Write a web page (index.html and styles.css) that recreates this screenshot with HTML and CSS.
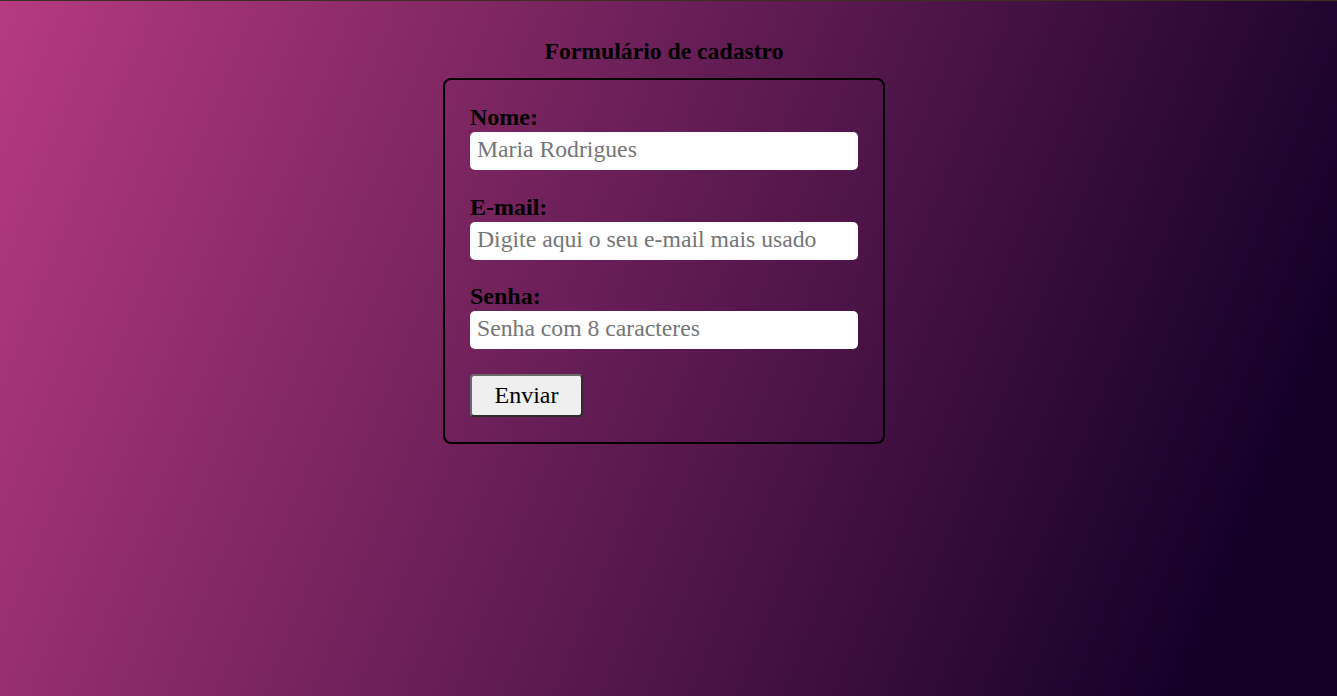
FILE: index.html
```html
<!DOCTYPE html>
<html lang="pt-BR">
<head>
<meta charset="utf-8">
<title>Formulário de cadastro</title>
<link rel="stylesheet" href="styles.css">
</head>
<body>
  <main class="page">
    <h2 class="title">Formulário de cadastro</h2>
    <form class="card">
      <label class="field-label" for="nome">Nome:</label>
      <input class="field-input" id="nome" type="text" placeholder="Maria Rodrigues">
      <label class="field-label" for="email">E-mail:</label>
      <input class="field-input" id="email" type="email" placeholder="Digite aqui o seu e-mail mais usado">
      <label class="field-label" for="senha">Senha:</label>
      <input class="field-input" id="senha" type="password" placeholder="Senha com 8 caracteres">
      <button class="submit" type="button">Enviar</button>
    </form>
  </main>
</body>
</html>
```
FILE: styles.css
```css
html, body {
  margin: 0;
  height: 100%;
}

body {
  border-top: 1px solid #3b3020;
  box-sizing: border-box;
  background: linear-gradient(112deg, #b63a80 0%, #15002a 90%);
  font-family: "Liberation Serif", "Times New Roman", serif;
  color: #000;
}

.page {
  display: flex;
  flex-direction: column;
  align-items: center;
  padding-right: 9px;
}

.title {
  margin: 37px 0 13px;
  font-size: 23.7px;
  font-weight: bold;
  line-height: normal;
}

.card {
  width: 388px;
  border: 2px solid #000;
  border-radius: 8px;
  padding: 24px 25px 25px;
  display: flex;
  flex-direction: column;
  align-items: flex-start;
}

.field-label {
  display: block;
  font-size: 24px;
  font-weight: bold;
  line-height: normal;
}

.field-input {
  display: block;
  box-sizing: border-box;
  width: 388px;
  height: 38px;
  margin: 1px 0 23.5px;
  padding: 3.5px 7px 6.5px;
  border: none;
  border-radius: 5px;
  background: #fff;
  font-family: "Liberation Serif", "Times New Roman", serif;
  font-size: 23.7px;
  color: #000;
  outline: none;
}

.field-input::placeholder {
  color: #757575;
}

.submit {
  margin-top: 1px;
  box-sizing: border-box;
  width: 113px;
  height: 43px;
  padding: 0;
  background: #efefef;
  border: 2px solid;
  border-color: #6a6a6a #2c2c2c #2c2c2c #6a6a6a;
  border-radius: 4px;
  font-family: "Liberation Serif", "Times New Roman", serif;
  font-size: 24px;
  color: #000;
}
```
